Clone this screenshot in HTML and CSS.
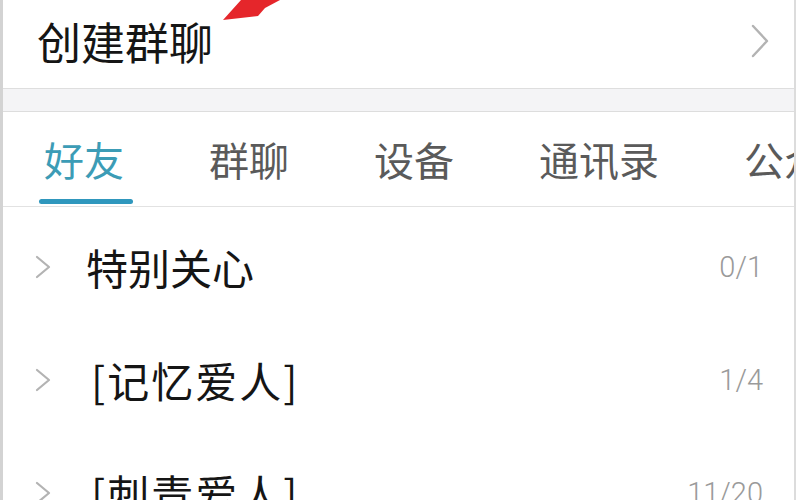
FILE: index.html
```html
<!DOCTYPE html>
<html lang="zh-CN">
<head>
<meta charset="utf-8">
<title>联系人</title>
<link rel="stylesheet" href="styles.css">
</head>
<body>
<div class="page">
  <div class="screen">
    <div class="create-row">
      <span class="create-label">创建群聊</span>
      <svg class="chev-big" width="18" height="34" viewBox="0 0 18 34"><path d="M2 2 L16 17 L2 32" fill="none" stroke="#b3b3b3" stroke-width="2.4" stroke-linecap="round" stroke-linejoin="round"/></svg>
    </div>
    <div class="band"></div>
    <div class="tabs">
      <div class="tab active"><span class="tab-text">好友</span><span class="tab-bar"></span></div>
      <div class="tab"><span class="tab-text">群聊</span><span class="tab-bar"></span></div>
      <div class="tab"><span class="tab-text">设备</span><span class="tab-bar"></span></div>
      <div class="tab"><span class="tab-text">通讯录</span><span class="tab-bar"></span></div>
      <div class="tab"><span class="tab-text">公众号</span><span class="tab-bar"></span></div>
    </div>
    <div class="groups">
      <div class="group">
        <svg class="chev" width="16" height="24" viewBox="0 0 16 24"><path d="M2 2 L14 12 L2 22" fill="none" stroke="#b3b3b3" stroke-width="2.2" stroke-linecap="round" stroke-linejoin="round"/></svg>
        <span class="group-name">特别关心</span>
        <span class="group-count">0/1</span>
      </div>
      <div class="group">
        <svg class="chev" width="16" height="24" viewBox="0 0 16 24"><path d="M2 2 L14 12 L2 22" fill="none" stroke="#b3b3b3" stroke-width="2.2" stroke-linecap="round" stroke-linejoin="round"/></svg>
        <span class="group-name bracket">[记忆爱人]</span>
        <span class="group-count">1/4</span>
      </div>
      <div class="group">
        <svg class="chev" width="16" height="24" viewBox="0 0 16 24"><path d="M2 2 L14 12 L2 22" fill="none" stroke="#b3b3b3" stroke-width="2.2" stroke-linecap="round" stroke-linejoin="round"/></svg>
        <span class="group-name bracket">[刺青爱人]</span>
        <span class="group-count">11/20</span>
      </div>
    </div>
  </div>
  <svg class="arrow" width="70" height="24" viewBox="0 0 70 24"><polygon points="3,20 21,0 60,0 45,8 38,16" fill="#e5262b"/></svg>
</div>
</body>
</html>
```

FILE: styles.css
```css
html, body {
  margin: 0;
  padding: 0;
  background: #ffffff;
}

body {
  width: 800px;
  height: 500px;
  overflow: hidden;
  font-family: "Noto Sans CJK SC", "Noto Sans", sans-serif;
}

.page {
  position: relative;
  width: 800px;
  height: 500px;
  background: #ffffff;
}

.screen {
  width: 791px;
  height: 500px;
  border-left: 3px solid #d3d3d3;
  border-right: 2px solid #dcdcdc;
  box-sizing: content-box;
  overflow: hidden;
  background: #ffffff;
}

.create-row {
  height: 88px;
  display: flex;
  align-items: center;
  justify-content: space-between;
  padding: 0 25px 0 34px;
  border-bottom: 1px solid #dedede;
}

.create-label {
  font-size: 44px;
  line-height: 44px;
  color: #151515;
  margin-top: -7px;
}

.chev-big {
  margin-top: -6px;
}

.band {
  height: 22px;
  background: #f4f4f6;
  border-bottom: 1px solid #dddddd;
}

.tabs {
  height: 94px;
  display: flex;
  gap: 85px;
  padding-left: 41px;
  border-bottom: 1px solid #e2e2e2;
  white-space: nowrap;
}

.tab {
  display: flex;
  flex-direction: column;
  align-items: stretch;
  padding-top: 27px;
}

.tab-text {
  font-size: 40px;
  line-height: 40px;
  color: #5a5a5a;
}

.tab-bar {
  height: 5px;
  margin: 20px -9px 0 -5px;
  border-radius: 3px;
  background: transparent;
}

.tab.active .tab-text {
  color: #3c9cb6;
}

.tab.active .tab-bar {
  background: #2f97bd;
}

.groups {
  padding-top: 3px;
}

.group {
  height: 113px;
  display: flex;
  align-items: center;
  padding: 0 31px 0 32px;
}

.chev {
  flex: none;
}

.group-name {
  flex: 1;
  margin-left: 35px;
  font-size: 42px;
  line-height: 42px;
  color: #151515;
}

.group-name.bracket {
  margin-left: 40px;
  letter-spacing: 2px;
}

.group-count {
  font-family: Roboto, "Liberation Sans", sans-serif;
  font-weight: 300;
  font-size: 29px;
  line-height: 30px;
  color: #9a9a9a;
}

.arrow {
  position: absolute;
  left: 220px;
  top: 0;
}
```
